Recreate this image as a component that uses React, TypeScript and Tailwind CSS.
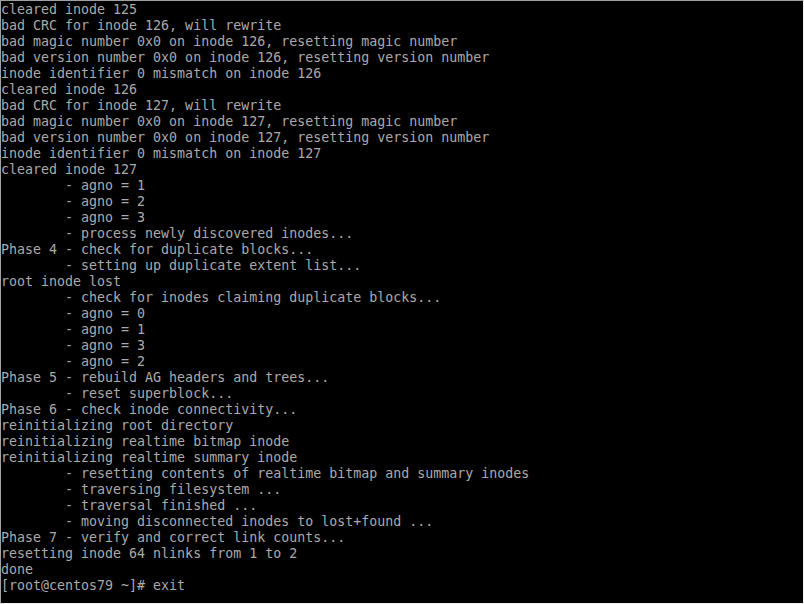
const lines = [
  "cleared inode 125",
  "bad CRC for inode 126, will rewrite",
  "bad magic number 0x0 on inode 126, resetting magic number",
  "bad version number 0x0 on inode 126, resetting version number",
  "inode identifier 0 mismatch on inode 126",
  "cleared inode 126",
  "bad CRC for inode 127, will rewrite",
  "bad magic number 0x0 on inode 127, resetting magic number",
  "bad version number 0x0 on inode 127, resetting version number",
  "inode identifier 0 mismatch on inode 127",
  "cleared inode 127",
  "        - agno = 1",
  "        - agno = 2",
  "        - agno = 3",
  "        - process newly discovered inodes...",
  "Phase 4 - check for duplicate blocks...",
  "        - setting up duplicate extent list...",
  "root inode lost",
  "        - check for inodes claiming duplicate blocks...",
  "        - agno = 0",
  "        - agno = 1",
  "        - agno = 3",
  "        - agno = 2",
  "Phase 5 - rebuild AG headers and trees...",
  "        - reset superblock...",
  "Phase 6 - check inode connectivity...",
  "reinitializing root directory",
  "reinitializing realtime bitmap inode",
  "reinitializing realtime summary inode",
  "        - resetting contents of realtime bitmap and summary inodes",
  "        - traversing filesystem ...",
  "        - traversal finished ...",
  "        - moving disconnected inodes to lost+found ...",
  "Phase 7 - verify and correct link counts...",
  "resetting inode 64 nlinks from 1 to 2",
  "done",
  "[root@centos79 ~]# exit",
];

export default function App() {
  return (
    <div className="w-[804px] h-[604px] bg-black border border-t-[#a0a0a0] border-l-[#a0a0a0] border-r-[#f0f0f0] border-b-[#f0f0f0] overflow-hidden">
      <div
        className="flex flex-col pt-[1px] text-[#aaaaaa] text-[13.3px] leading-[16px] whitespace-pre"
        style={{ fontFamily: '"DejaVu Sans Mono", "Liberation Mono", monospace' }}
      >
        {lines.map((l, i) => (
          <div key={i} className="h-[16px]">{l}</div>
        ))}
      </div>
    </div>
  );
}
